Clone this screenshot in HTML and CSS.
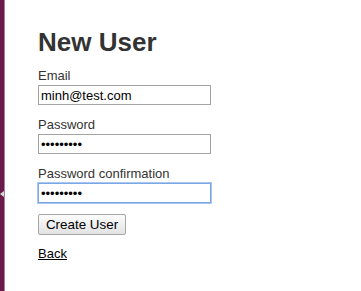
FILE: index.html
```html
<!DOCTYPE html>
<html lang="en">
<head>
<meta charset="utf-8">
<title>New User</title>
<link rel="stylesheet" href="styles.css">
</head>
<body>
<div class="frame">
  <div class="rail"><span class="handle"></span></div>
  <main class="content">
    <h1 class="title">New User</h1>
    <form class="form" onsubmit="return false">
      <div class="field">
        <label class="label" for="email">Email</label>
        <input class="input" id="email" type="text" value="minh@test.com">
      </div>
      <div class="field">
        <label class="label" for="pw">Password</label>
        <input class="input" id="pw" type="password" value="123456789">
      </div>
      <div class="field">
        <label class="label" for="pwc">Password confirmation</label>
        <input class="input input-focus" id="pwc" type="password" value="123456789">
      </div>
      <div class="actions">
        <button class="button" type="submit">Create User</button>
      </div>
    </form>
    <a class="back" href="#">Back</a>
  </main>
</div>
</body>
</html>
```
FILE: styles.css
```css
html, body {
  margin: 0;
  padding: 0;
  background: #fff;
}
body {
  font-family: "Liberation Sans", Arial, sans-serif;
  font-size: 13px;
  line-height: 15px;
  color: #333;
}
.frame {
  display: flex;
  min-height: 291px;
}
.rail {
  position: relative;
  width: 4px;
  flex: 0 0 4px;
  background: #6a1b4a;
  border-right: 1px solid #a9809a;
}
.handle {
  position: absolute;
  left: 0;
  top: 191px;
  width: 0;
  height: 0;
  border-top: 3px solid transparent;
  border-bottom: 3px solid transparent;
  border-right: 4px solid #d8d8d8;
}
.content {
  padding: 27px 0 0 33px;
  display: flex;
  flex-direction: column;
  align-items: flex-start;
}
.title {
  margin: 0 0 11px;
  font-size: 26px;
  line-height: 30px;
  font-weight: bold;
  color: #333;
}
.form {
  display: flex;
  flex-direction: column;
  gap: 12px;
  margin: 0;
}
.field {
  display: flex;
  flex-direction: column;
  align-items: flex-start;
  gap: 2px;
}
.label {
  display: block;
  color: #333;
}
.input {
  box-sizing: border-box;
  width: 173px;
  height: 20px;
  margin: 0;
  padding: 1px 2px;
  border: 1px solid #a3a3a3;
  border-radius: 0;
  font-family: "Liberation Sans", Arial, sans-serif;
  font-size: 13px;
  color: #000;
  background: #fff;
  outline: none;
}
.input-focus {
  border-color: #7aa7e6;
  box-shadow: 0 0 0 1px #a9c6f0;
}
.actions {
  margin-top: -1px;
}
.button {
  box-sizing: border-box;
  width: 88px;
  height: 21px;
  margin: 0;
  padding: 0 6px;
  border: 1px solid #a6a6a6;
  border-radius: 2px;
  background: linear-gradient(#fcfcfc, #e2e2e2);
  font-family: "Liberation Sans", Arial, sans-serif;
  font-size: 13.4px;
  line-height: 19px;
  color: #000;
}
.back {
  margin-top: 11px;
  color: #000;
  text-decoration: underline;
}
```
